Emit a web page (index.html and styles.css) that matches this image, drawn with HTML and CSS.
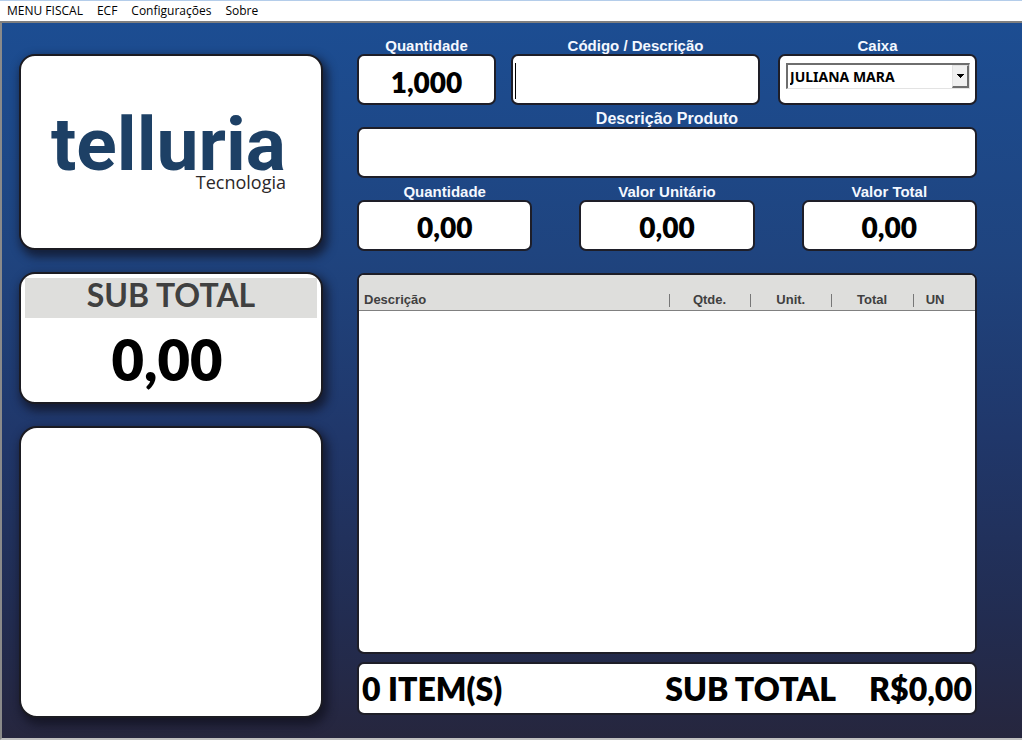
FILE: index.html
```html
<!DOCTYPE html>
<html lang="pt-BR">
<head>
<meta charset="utf-8">
<meta name="viewport" content="width=device-width, initial-scale=1">
<title>Telluria Tecnologia</title>
<link rel="stylesheet" href="styles.css">
</head>
<body>
<nav class="menu">
  <button type="button">MENU FISCAL</button>
  <button type="button">ECF</button>
  <button type="button">Configurações</button>
  <button type="button">Sobre</button>
</nav>
<main class="pos">
  <aside class="side">
    <section class="card brand">
      <div class="logo">
        <div class="logo-name">telluria</div>
        <div class="logo-sub">Tecnologia</div>
      </div>
    </section>
    <section class="card subtotal">
      <h2>SUB TOTAL</h2>
      <output>0,00</output>
    </section>
    <section class="card display"></section>
  </aside>
  <div class="sale">
    <div class="row entry">
      <div class="field">
        <label for="qty">Quantidade</label>
        <input class="box" id="qty" value="1,000">
      </div>
      <div class="field">
        <label for="code">Código / Descrição</label>
        <input class="box code" id="code">
      </div>
      <div class="field operator">
        <label for="cashier">Caixa</label>
        <div class="box cashier">
          <div class="combo">
            <select id="cashier"><option>JULIANA MARA</option></select>
            <span class="combo-arrow"><svg width="7" height="4" viewBox="0 0 7 4" shape-rendering="crispEdges"><path d="M0 0H7L3.500 4Z"/></svg></span>
          </div>
        </div>
      </div>
    </div>
    <div class="field product">
      <label for="product">Descrição Produto</label>
      <input class="box" id="product" readonly>
    </div>
    <div class="row values">
      <div class="field">
        <label for="item-qty">Quantidade</label>
        <input class="box" id="item-qty" value="0,00" readonly>
      </div>
      <div class="field">
        <label for="unit">Valor Unitário</label>
        <input class="box" id="unit" value="0,00" readonly>
      </div>
      <div class="field">
        <label for="total">Valor Total</label>
        <input class="box" id="total" value="0,00" readonly>
      </div>
    </div>
    <div class="box items">
      <table>
        <colgroup><col class="c-desc"><col class="c-num"><col class="c-num"><col class="c-num"><col class="c-un"></colgroup>
        <thead>
          <tr><th>Descrição</th><th>Qtde.</th><th>Unit.</th><th>Total</th><th>UN</th></tr>
        </thead>
        <tbody></tbody>
      </table>
    </div>
    <footer class="box summary">
      <span>0 ITEM(S)</span>
      <span class="sum-label">SUB TOTAL</span>
      <span>R$0,00</span>
    </footer>
  </div>
</main>
</body>
</html>
```
FILE: styles.css
```css
* { box-sizing: border-box; }

body {
  margin: 0;
  min-height: 100vh;
  display: flex;
  flex-direction: column;
  font-family: Lato, Carlito, sans-serif;
  color: #000;
}

.menu {
  display: flex;
  height: 23px;
  background: #fff;
  border-top: 1px solid #b4cdea;
  border-bottom: 2px solid #808080;
}

.menu button {
  border: 0;
  padding: 0 7px;
  background: none;
  font: 12px/20px "Open Sans", sans-serif;
  color: #000;
}

.pos {
  flex: 1;
  display: grid;
  grid-template-columns: minmax(0, 304fr) minmax(0, 620fr);
  gap: 34px;
  padding: 0 45px 0 17px;
  border-left: 2px solid #8a8a8a;
  border-bottom: 2px solid #c0c0c0;
  background: linear-gradient(#1c4d92 0%, #1f447f 32%, #20376a 58%, #222c50 84%, #26263e 100%);
}

.side {
  display: flex;
  flex-direction: column;
  gap: 22px;
  padding: 31px 0 20px;
}

.card {
  background: #fff;
  border: 2px solid #1b1b22;
  border-radius: 16px;
  box-shadow: 3px 5px 10px 2px rgba(16, 16, 28, 0.7);
}

.brand {
  height: 196px;
  display: flex;
  align-items: center;
  justify-content: center;
}

.logo { padding: 4px 5px 0 0; }

.logo-name {
  font: bold 75px/56px Roboto, sans-serif;
  color: #1d4065;
}

.logo-sub {
  font: 18px/20px "Open Sans", sans-serif;
  color: #2b2729;
  text-align: right;
}

.subtotal {
  height: 132px;
  padding: 4px;
  display: flex;
  flex-direction: column;
  text-align: center;
}

.subtotal h2 {
  margin: 0;
  flex: none;
  height: 40px;
  background: #dededc;
  color: #404040;
  font-size: 32px;
  line-height: 34px;
}

.subtotal output {
  padding-right: 8px;
  font-size: 56px;
  line-height: 84px;
  font-weight: 800;
}

.display { flex: 1; border-radius: 18px; }

.sale {
  display: flex;
  flex-direction: column;
  gap: 6px;
  padding: 15px 0 23px;
}

.row { display: grid; }

.entry {
  grid-template-columns: minmax(0, 139fr) minmax(0, 249fr) minmax(0, 202fr);
  gap: 15px;
}

.operator { padding-left: 3px; }

.values {
  grid-template-columns: repeat(3, minmax(0, 1fr));
  gap: 47px;
}

.field {
  display: flex;
  flex-direction: column;
}

.field label {
  font: bold 15px/16px "Liberation Sans", Arial, sans-serif;
  color: #f4f8ff;
  text-align: center;
}

.product label { font-size: 16px; line-height: 15px; padding-bottom: 1px; }

.box {
  background: #fff;
  border: 2px solid #1e1e28;
  border-radius: 7px;
}

.field .box {
  width: 100%;
  height: 51px;
}

input.box {
  padding: 5px 0 0;
  font: 800 28px/40px Lato, Carlito, sans-serif;
  color: #000;
  text-align: center;
  outline: 0;
}

.values input.box { padding: 3px 0 0; }

.field .code {
  text-align: left;
  background: linear-gradient(#000, #000) 2px 7px / 1px 36px no-repeat #fff;
}

.cashier { padding: 7px 5px 7px 6px; }

.combo {
  position: relative;
  height: 26px;
}

.combo select {
  appearance: none;
  width: 100%;
  height: 100%;
  padding: 0 18px 0 2px;
  border: 1px solid #e3e3e3;
  border-top: 2px solid #6e6e6e;
  border-left: 2px solid #6e6e6e;
  border-radius: 0;
  background: #fff;
  color: #000;
  font: bold 14px/20px "Noto Sans", sans-serif;
}

.combo-arrow {
  position: absolute;
  top: 2px;
  right: 1px;
  bottom: 1px;
  width: 17px;
  display: flex;
  align-items: center;
  justify-content: center;
  background: #f0f0f0;
  border: 1px solid #e3e3e3;
  border-right: 2px solid #6e6e6e;
  border-bottom: 2px solid #6e6e6e;
  pointer-events: none;
}

.items {
  flex: 1;
  margin-top: 16px;
  margin-bottom: 2px;
  overflow: hidden;
}

.items table {
  width: 100%;
  table-layout: fixed;
  border-collapse: collapse;
}

.c-desc { width: 50.3%; }
.c-num { width: 13.2%; }

.items thead { background: #dededc; }

.items th {
  height: 35px;
  padding: 16px 0 0;
  border-bottom: 1px solid #808080;
  background: linear-gradient(#777, #777) 0 19px / 1px 13px no-repeat;
  font: bold 13px/16px "Liberation Sans", Arial, sans-serif;
  color: #404040;
  text-align: center;
}

.items th:first-child {
  padding-left: 5px;
  background: none;
  text-align: left;
}

.items th:last-child {
  padding-left: 13px;
  text-align: left;
}

.summary {
  display: flex;
  gap: 33px;
  padding: 1px 3px;
  font-size: 32px;
  line-height: 47px;
  font-weight: 800;
}

.sum-label { margin-left: auto; }
```
